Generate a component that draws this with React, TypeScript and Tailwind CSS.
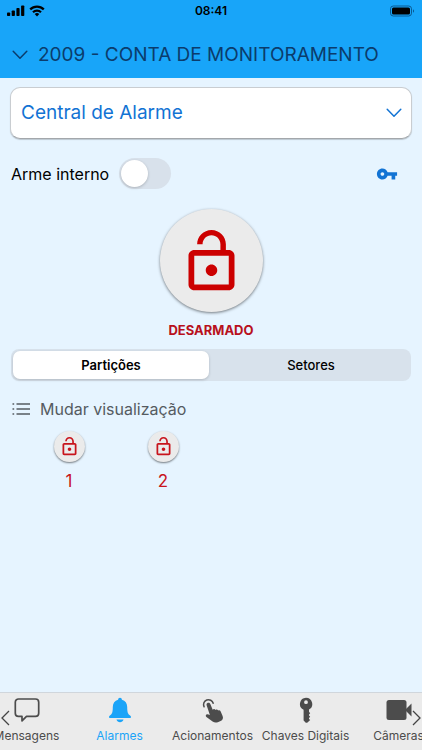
import { useState } from "react";
import type { ReactNode } from "react";

function LockOpen({ className }: { className: string }) {
  return (
    <svg viewBox="0 0 24 24" fill="currentColor" className={className} aria-hidden="true">
      <path d="M12 17c1.1 0 2-.9 2-2s-.9-2-2-2-2 .9-2 2 .9 2 2 2zm6-9h-1V6c0-2.76-2.24-5-5-5S7 3.24 7 6h1.9c0-1.71 1.39-3.1 3.1-3.1 1.71 0 3.1 1.39 3.1 3.1v2H6c-1.1 0-2 .9-2 2v10c0 1.1.9 2 2 2h12c1.1 0 2-.9 2-2V10c0-1.1-.9-2-2-2zm0 12H6V10h12v10z" />
    </svg>
  );
}

function ChevronDown({ className }: { className: string }) {
  return (
    <svg viewBox="0 0 16 10" fill="none" stroke="currentColor" strokeWidth="1.5" strokeLinecap="round" strokeLinejoin="round" className={className} aria-hidden="true">
      <path d="M1.2 1.2 8 8.2l6.8-7" />
    </svg>
  );
}

function StatusBar() {
  return (
    <div className="grid h-[22px] grid-cols-3 items-center px-[7px] text-black">
      <div className="flex items-center gap-1">
        <svg viewBox="0 0 18 12" className="h-3 w-[18px]" aria-hidden="true">
          <rect x="0" y="7.5" width="3.2" height="3.5" rx="0.8" />
          <rect x="4.7" y="5.5" width="3.2" height="5.5" rx="0.8" />
          <rect x="9.4" y="3" width="3.2" height="8" rx="0.8" />
          <rect x="14.1" y="0.5" width="3.2" height="10.5" rx="0.8" />
        </svg>
        <svg viewBox="0 0 16 12" className="h-3 w-4" aria-hidden="true">
          <g fill="none" stroke="currentColor" strokeWidth="2.2">
            <path d="M1.2 4.4a9.6 9.6 0 0 1 13.6 0" />
            <path d="M4 7.2a5.7 5.7 0 0 1 8 0" />
          </g>
          <path d="M8 11.4 5.7 9.1a3.3 3.3 0 0 1 4.6 0z" />
        </svg>
      </div>
      <span className="text-center text-[12px] leading-4 font-semibold">08:41</span>
      <svg viewBox="0 0 26 12" className="h-3 w-[26px] justify-self-end" aria-hidden="true">
        <rect x="1.5" y="1" width="21" height="10" rx="2.8" fill="none" stroke="#0a5a92" strokeWidth="1" />
        <rect x="3" y="2.5" width="18" height="7" rx="1.5" />
        <path d="M24 4.3v3.4c1.4-.6 1.4-2.8 0-3.4z" fill="#0a5a92" />
      </svg>
    </div>
  );
}

function TabItem({ label, active, children }: { label: string; active?: boolean; children: ReactNode }) {
  return (
    <button
      type="button"
      aria-current={active ? "page" : undefined}
      className={
        "flex w-[93px] shrink-0 flex-col items-center gap-1 whitespace-nowrap text-[12px] leading-4 " +
        (active ? "text-[#1ba4f8]" : "text-[#4c4c4c]")
      }
    >
      <span className="flex h-7 items-center">{children}</span>
      {label}
    </button>
  );
}

const views = ["Partições", "Setores"];
const partitions = [1, 2];

export default function App() {
  const [armed, setArmed] = useState(false);
  const [view, setView] = useState("Partições");

  return (
    <div className="flex min-h-screen flex-col overflow-hidden bg-[#e6f4ff] font-['Inter','Liberation_Sans',sans-serif]">
      <header className="bg-[#18a5f9]">
        <StatusBar />
        <button type="button" className="flex h-14 w-full items-center gap-[10px] px-3 pt-[10px] text-[#0b3c6c]">
          <ChevronDown className="h-[10px] w-4" />
          <h1 className="whitespace-nowrap text-[19px] leading-6 font-normal">2009 - CONTA DE MONITORAMENTO</h1>
        </button>
      </header>

      <main className="flex flex-col px-[10px] pt-[9px]">
        <div className="grid items-center text-[#1273d4]">
          <select
            aria-label="Central"
            className="col-start-1 row-start-1 h-[52px] w-full appearance-none rounded-[10px] border border-[#c9cdd1] border-b-[#a3a7ab] bg-white px-[10px] text-[19px] shadow-[0_1px_1px_#00000030]"
          >
            <option>Central de Alarme</option>
          </select>
          <ChevronDown className="pointer-events-none col-start-1 row-start-1 mr-[10px] h-[10px] w-4 justify-self-end" />
        </div>

        <div className="mt-[19px] flex items-center justify-between pr-[14px]">
          <label className="flex items-center gap-[10px] pl-px text-[16px] leading-6 text-black">
            Arme interno
            <input
              type="checkbox"
              checked={armed}
              onChange={() => setArmed(!armed)}
              className="flex h-[31px] w-[52px] appearance-none items-center rounded-full bg-[#d8e1eb] p-[2px] before:h-[27px] before:w-[27px] before:rounded-full before:bg-white before:shadow-[0_1px_3px_#00000035] checked:justify-end checked:bg-[#18a5f9]"
            />
          </label>
          <button type="button" aria-label="Chave" className="text-[#1273d4]">
            <svg viewBox="0 0 24 24" fill="currentColor" className="h-[22px] w-[22px]" aria-hidden="true">
              <path d="M12.65 10C11.83 7.67 9.61 6 7 6c-3.31 0-6 2.69-6 6s2.69 6 6 6c2.61 0 4.83-1.67 5.65-4H17v4h4v-4h2v-4H12.65zM7 14c-1.1 0-2-.9-2-2s.9-2 2-2 2 .9 2 2-.9 2-2 2z" />
            </svg>
          </button>
        </div>

        <div className="mt-5 flex flex-col items-center text-[#cc0000]">
          <button type="button" aria-label="Armar" className="flex h-[103px] w-[103px] items-center justify-center rounded-full bg-[#ebebeb] pt-[2px] shadow-[0_1px_3px_#00000080]">
            <LockOpen className="h-[69px] w-[69px]" />
          </button>
          <p className="mt-2 text-[13px] leading-5 font-bold text-[#b8101c]">DESARMADO</p>
        </div>

        <div role="group" aria-label="Exibir" className="mx-px mt-[9px] grid h-8 grid-cols-2 gap-1 rounded-[8px] bg-[#d8e2ec] p-[2px]">
          {views.map((name) => (
            <button
              key={name}
              type="button"
              aria-pressed={view === name}
              onClick={() => setView(name)}
              className={
                "rounded-[7px] text-[13px] leading-4 text-black " +
                (view === name ? "bg-white font-semibold shadow-[0_1px_3px_#00000030]" : "font-medium")
              }
            >
              {name}
            </button>
          ))}
        </div>

        <button type="button" className="mt-4 flex items-center gap-[10px] self-start pl-[2px] text-[16px] leading-6 text-[#555b61]">
          <svg viewBox="0 0 18 14" className="h-[14px] w-[18px]" fill="none" stroke="currentColor" strokeWidth="1.3" aria-hidden="true">
            <path d="M4.5 2H18M4.5 7H18M4.5 12H18" />
            <path d="M0.5 2h1.7M0.5 7h1.7M0.5 12h1.7" strokeWidth="1.7" />
          </svg>
          Mudar visualização
        </button>

        <ul className="mt-[10px] flex px-3">
          {partitions.map((n) => (
            <li key={n} className="w-[94px]">
              <button type="button" className="flex w-full flex-col items-center gap-[7px] text-[17px] leading-6 text-[#c8141c]">
                <span className="flex h-[31px] w-[31px] items-center justify-center rounded-full bg-[#ebebeb] shadow-[0_1px_2px_#00000080]">
                  <LockOpen className="h-[21px] w-[21px]" />
                </span>
                {n}
              </button>
            </li>
          ))}
        </ul>
      </main>

      <nav className="relative mt-auto h-[58px] overflow-hidden border-t border-[#d0d6dc] bg-[#ebebeb] pt-[3px]">
        <div className="-ml-5 flex">
          <TabItem label="Mensagens">
            <svg viewBox="0 0 26 24" className="h-6 w-[26px]" fill="none" stroke="currentColor" strokeWidth="1.7" strokeLinejoin="round" aria-hidden="true">
              <path d="M4.500 1h17a3.200 3.200 0 0 1 3.200 3.200v11a3.200 3.200 0 0 1-3.200 3.200h-9L8 22.800v-4.400H4.500a3.200 3.200 0 0 1-3.200-3.200v-11A3.200 3.200 0 0 1 4.500 1z" />
            </svg>
          </TabItem>
          <TabItem label="Alarmes" active>
            <svg viewBox="0 0 24 26" className="h-[26px] w-6" fill="currentColor" aria-hidden="true">
              <path d="M12 .8c1.100 0 1.900.8 1.900 1.900 3.400.8 5.300 3.500 5.300 7.300 0 5.700 1 7.300 2.900 8.600.7.500.9.900.9 1.400 0 .6-.5 1-1.200 1H2.200C1.500 21 1 20.600 1 20c0-.5.2-.9.9-1.400C3.800 17.300 4.800 15.700 4.800 10c0-3.800 1.900-6.500 5.300-7.300C10.100 1.600 10.900.8 12 .8z" />
              <path d="M8.500 22.500h7c-.5 1.700-1.900 2.700-3.500 2.700s-3-1-3.500-2.700z" />
            </svg>
          </TabItem>
          <TabItem label="Acionamentos">
            <svg viewBox="0 0 22 25" className="h-[25px] w-[22px]" fill="currentColor" aria-hidden="true">
              <path d="M2.100 8.800A4.900 4.900 0 1 1 11.200 5.300" fill="none" stroke="currentColor" strokeWidth="1.500" strokeLinecap="round" />
              <path d="M4.700 7.600c-.5-1.300.1-2.400 1.100-2.800 1-.4 2.100.1 2.500 1.200l2.400 5.700c.8-.9 2.200-.8 2.800.3.900-.8 2.200-.5 2.700.5.900-.6 2-.2 2.500.9l1.900 4.600c.9 2.200.1 4.100-2 5l-2.800 1.200c-2 .8-3.700.4-5.200-.7l-6.200-4.600c-1-.8-.7-2.300.5-2.600.8-.2 1.900.2 3 .8z" />
            </svg>
          </TabItem>
          <TabItem label="Chaves Digitais">
            <svg viewBox="0 0 14 26" className="h-[26px] w-[14px]" fill="currentColor" aria-hidden="true">
              <path fillRule="evenodd" d="M7 .8a6.300 6.300 0 0 1 3 11.800v2.200l1.200 1.400-1.200 1.400v.8l1.200 1.400-1.200 1.300v.8l1.200 1.200-3 2.600c-.5.200-1 .2-1.400 0L4.600 23.500V12.800A6.300 6.300 0 0 1 7 .8zm0 2.500a1.900 1.900 0 1 0 0 3.800 1.900 1.900 0 0 0 0-3.800z" />
            </svg>
          </TabItem>
          <TabItem label="Câmeras">
            <svg viewBox="0 0 26 22" className="h-[22px] w-[26px]" fill="currentColor" aria-hidden="true">
              <rect x="0.500" y="1" width="20" height="20" rx="2.500" />
              <path d="M19 11 25.500 4.500v13z" />
            </svg>
          </TabItem>
        </div>
        <button type="button" aria-label="Anterior" className="absolute top-[17px] left-px text-[#444444]">
          <svg viewBox="0 0 9 16" className="h-4 w-[9px]" fill="none" stroke="currentColor" strokeWidth="1.300" aria-hidden="true">
            <path d="M8 1 1 8l7 7" />
          </svg>
        </button>
        <button type="button" aria-label="Próximo" className="absolute top-[17px] right-px text-[#444444]">
          <svg viewBox="0 0 9 16" className="h-4 w-[9px]" fill="none" stroke="currentColor" strokeWidth="1.300" aria-hidden="true">
            <path d="M1 1l7 7-7 7" />
          </svg>
        </button>
      </nav>
    </div>
  );
}
